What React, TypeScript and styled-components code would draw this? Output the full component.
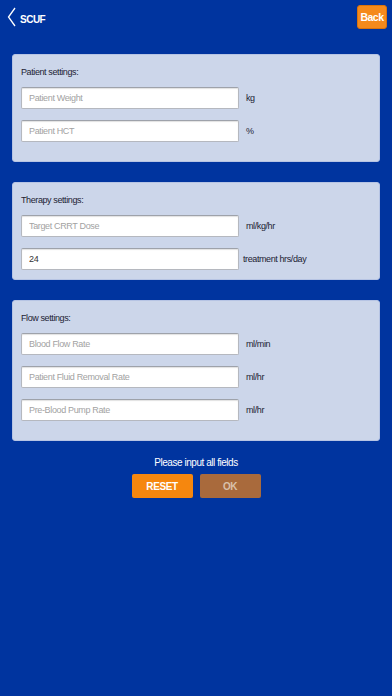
import React from 'react';
import styled, { createGlobalStyle } from 'styled-components';

const GlobalStyle = createGlobalStyle`
  html, body {
    margin: 0;
    padding: 0;
    background: #00349f;
  }
  body {
    font-family: "Liberation Sans", Arial, sans-serif;
  }
`;

const Page = styled.div`
  min-height: 696px;
  background: #00349f;
  display: flex;
  flex-direction: column;
`;

const Header = styled.div`
  display: flex;
  align-items: center;
  justify-content: space-between;
  padding: 5px 5px 0 7px;
  height: 24px;
`;

const TitleWrap = styled.div`
  display: flex;
  align-items: center;
  gap: 4px;
  color: #fff;
`;

const Title = styled.span`
  font-size: 10px;
  font-weight: 700;
  letter-spacing: -0.5px;
  margin-top: 4px;
`;

const BackButton = styled.button`
  width: 30px;
  height: 24px;
  padding: 0;
  border: 1px solid #d9730e;
  border-radius: 3px;
  background: #f58a1c;
  color: #fff;
  font-family: inherit;
  font-size: 10.5px;
  font-weight: 700;
  letter-spacing: -0.5px;
`;

const Cards = styled.div`
  display: flex;
  flex-direction: column;
  gap: 20px;
  padding: 25px 12px 0;
`;

const Card = styled.section<{ $bottom: number }>`
  background: #ccd6ea;
  border: 1px solid #b6c4e4;
  border-radius: 3px;
  padding: 11px 8px ${p => p.$bottom}px;
  display: flex;
  flex-direction: column;
  gap: 11px;
`;

const CardTitle = styled.h2`
  margin: 0 0 -2px;
  font-size: 9px;
  font-weight: 400;
  letter-spacing: -0.4px;
  color: #1c2233;
  line-height: 12px;
`;

const Row = styled.div`
  display: flex;
  align-items: center;
`;

const Input = styled.input`
  box-sizing: border-box;
  width: 218px;
  height: 22px;
  padding: 0 7px;
  border: 1px solid #b5b8bf;
  border-top-color: #9ea2aa;
  border-radius: 2px;
  background: #fff;
  box-shadow: inset 0 1px 1px rgba(0, 0, 0, 0.12);
  font-family: inherit;
  font-size: 9px;
  letter-spacing: -0.35px;
  color: #333;
  outline: none;

  &::placeholder {
    color: #a2a2a2;
  }
`;

const Unit = styled.span<{ $gap?: number }>`
  margin-left: ${p => p.$gap ?? 7}px;
  font-size: 9px;
  letter-spacing: -0.4px;
  color: #1c2233;
`;

const Footer = styled.div`
  display: flex;
  flex-direction: column;
  align-items: center;
  padding-top: 16px;
  gap: 5px;
`;

const Message = styled.div`
  color: #fff;
  font-size: 10px;
  letter-spacing: -0.45px;
  line-height: 12px;
`;

const Buttons = styled.div`
  display: flex;
  gap: 7px;
`;

const ActionButton = styled.button<{ $bg: string; $fg: string }>`
  width: 61px;
  height: 24px;
  border: none;
  border-radius: 2px;
  background: ${p => p.$bg};
  color: ${p => p.$fg};
  font-family: inherit;
  font-size: 10px;
  font-weight: 700;
  letter-spacing: -0.4px;
`;

type Field = { placeholder: string; unit: string; value?: string; gap?: number };

const sections: { title: string; bottom: number; fields: Field[] }[] = [
  {
    title: 'Patient settings:',
    bottom: 19,
    fields: [
      { placeholder: 'Patient Weight', unit: 'kg' },
      { placeholder: 'Patient HCT', unit: '%' },
    ],
  },
  {
    title: 'Therapy settings:',
    bottom: 9,
    fields: [
      { placeholder: 'Target CRRT Dose', unit: 'ml/kg/hr' },
      { placeholder: '', unit: 'treatment hrs/day', value: '24', gap: 4 },
    ],
  },
  {
    title: 'Flow settings:',
    bottom: 19,
    fields: [
      { placeholder: 'Blood Flow Rate', unit: 'ml/min' },
      { placeholder: 'Patient Fluid Removal Rate', unit: 'ml/hr' },
      { placeholder: 'Pre-Blood Pump Rate', unit: 'ml/hr' },
    ],
  },
];

export default function App() {
  return (
    <Page>
      <GlobalStyle />
      <Header>
        <TitleWrap>
          <svg width="9" height="20" viewBox="0 0 9 20">
            <path d="M8 1 L1.5 10 L8 19" fill="none" stroke="#fff" strokeWidth="1.3" />
          </svg>
          <Title>SCUF</Title>
        </TitleWrap>
        <BackButton>Back</BackButton>
      </Header>

      <Cards>
        {sections.map(s => (
          <Card key={s.title} $bottom={s.bottom}>
            <CardTitle>{s.title}</CardTitle>
            {s.fields.map(f => (
              <Row key={f.unit + f.placeholder}>
                <Input placeholder={f.placeholder} defaultValue={f.value} />
                <Unit $gap={f.gap}>{f.unit}</Unit>
              </Row>
            ))}
          </Card>
        ))}
      </Cards>

      <Footer>
        <Message>Please input all fields</Message>
        <Buttons>
          <ActionButton $bg="#f6870e" $fg="#fff">RESET</ActionButton>
          <ActionButton $bg="#a96a3c" $fg="#d9c0aa">OK</ActionButton>
        </Buttons>
      </Footer>
    </Page>
  );
}
